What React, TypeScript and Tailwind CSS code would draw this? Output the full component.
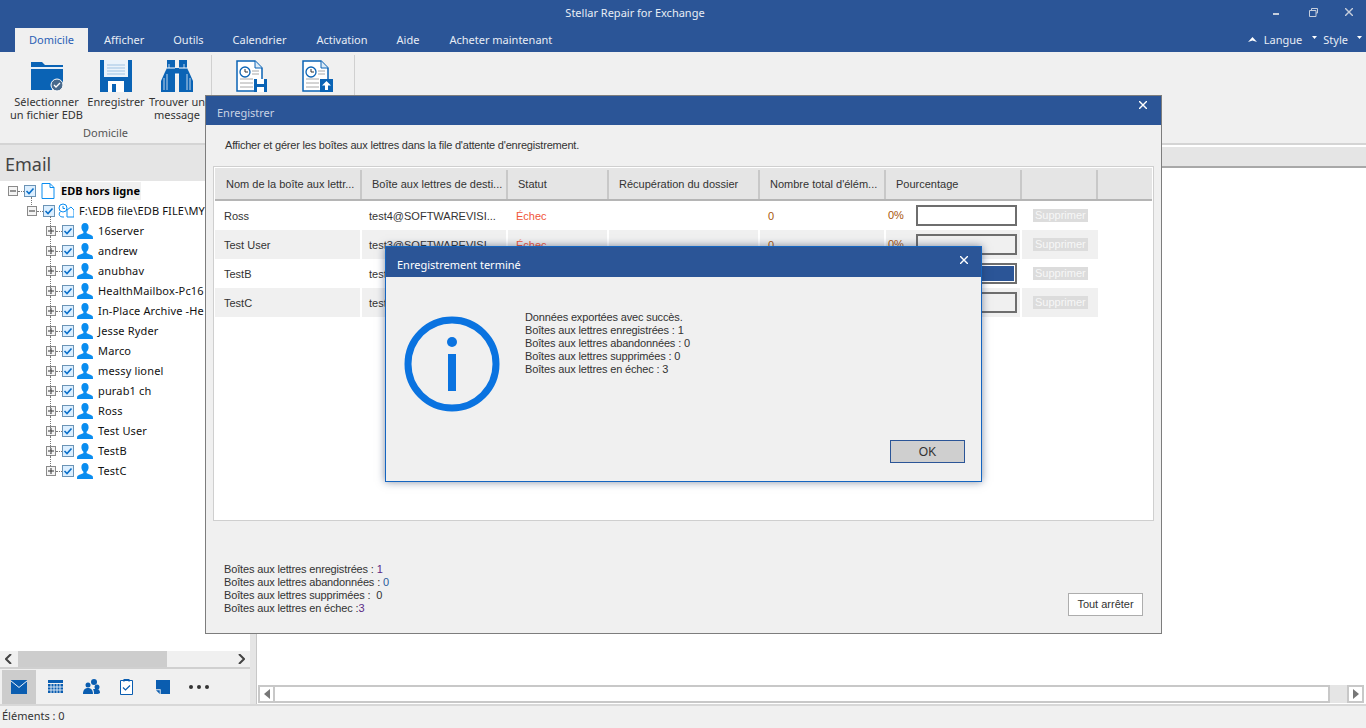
import React from "react";

const ui = "font-['Noto_Sans',sans-serif]";
const ms = "font-['Liberation_Sans',sans-serif]";

const users = ["16server","andrew","anubhav","HealthMailbox-Pc16","In-Place Archive -He","Jesse Ryder","Marco","messy lionel","purab1 ch","Ross","Test User","TestB","TestC"];

function Check() {
  return (
    <svg width="12" height="12" viewBox="0 0 12 12" className="shrink-0">
      <rect x="0.5" y="0.5" width="11" height="11" fill="#dcefff" stroke="#6b93b5" />
      <path d="M2.5 6l2.5 2.5 4.5-5" fill="none" stroke="#0a6fc9" strokeWidth="1.6" />
    </svg>
  );
}
function Expander({ open }: { open?: boolean }) {
  return (
    <svg width="10" height="10" viewBox="0 0 10 10" className="shrink-0">
      <rect x="0.5" y="0.5" width="9" height="9" fill="#f4f4f4" stroke="#8a8a8a" />
      <path d={open ? "M2 5h6" : "M2 5h6M5 2v6"} stroke="#333" strokeWidth="1" />
    </svg>
  );
}
function Person() {
  return (
    <svg width="16" height="16" viewBox="0 0 16 16" className="shrink-0">
      <path d="M8 0c2.4 0 3.6 1.9 3.6 4.2 0 2-1 3.7-2 4.5v1.2c0 .6 4.4 1.4 5.9 3 .5.6.5 2.1.5 3.1H0c0-1 0-2.500.5-3.100 1.500-1.600 5.900-2.400 5.900-3V8.700c-1-.8-2-2.500-2-4.500C4.400 1.900 5.600 0 8 0z" fill="#0a8df0" />
    </svg>
  );
}
function Ribbon({ children, w, className }: { children: React.ReactNode; w: string; className?: string }) {
  return <div className={`flex flex-col items-center ${w} ${className ?? ""}`}>{children}</div>;
}
function FolderIcon() {
  return (
    <svg width="32" height="32" viewBox="0 0 32 32">
      <path d="M0 2h11l3 3h18v6H0z" fill="#0a63b5" />
      <path d="M0 7h32v2H0z" fill="#fff" opacity="0.9" />
      <path d="M0 9h32v15H21v6H0z" fill="#0a63b5" />
      <circle cx="26" cy="25" r="6" fill="#48698c" stroke="#fff" strokeWidth="1" />
      <path d="M23 25l2 2 4-4" fill="none" stroke="#fff" strokeWidth="1.300" />
    </svg>
  );
}
function FloppyIcon() {
  return (
    <svg width="32" height="32" viewBox="0 0 32 32">
      <path d="M0 0h32v32H0z" fill="#0a63b5" />
      <path d="M4 0h24v17H4z" fill="#eaf3fb" />
      <path d="M7 5h18M7 8h18M7 11h18M7 14h18" stroke="#9fc3e3" strokeWidth="1" />
      <path d="M8 21h16v11H8z" fill="#fff" />
      <path d="M12 24h4v8h-4z" fill="#0a63b5" />
    </svg>
  );
}
function BinocularIcon() {
  return (
    <svg width="32" height="32" viewBox="0 0 32 32">
      <path d="M6 0h8v8h4V0h8v8l2 4 4 9v11H18V14h-4v18H0V21l4-9 2-4z" fill="#0a63b5" />
      <path d="M6 8h8M18 8h8M14 14h4" stroke="#fff" strokeWidth="1" />
      <path d="M3 18v12M6 14v16M8 4v4M23 4v4M26 14v16M29 18v12" stroke="#fff" strokeWidth="1" opacity="0.75" />
    </svg>
  );
}
function DocClock({ upload }: { upload?: boolean }) {
  return (
    <svg width="32" height="32" viewBox="0 0 32 32">
      <path d="M1 1h18l7 7v23H1z" fill="#fff" stroke="#0a63b5" strokeWidth="1.500" />
      <path d="M19 1v7h7" fill="#dcebf7" stroke="#0a63b5" />
      <circle cx="9" cy="12" r="5" fill="#fff" stroke="#0a63b5" strokeWidth="1.300" />
      <path d="M9 9v3h3" fill="none" stroke="#333" />
      <path d="M16 11h7M16 14h7M4 19h13M4 23h13M4 27h13" stroke="#a8a8a8" strokeWidth="1" />
      {upload ? (
        <g>
          <path d="M18 19h13v13H18z" fill="#0a63b5" />
          <path d="M24.500 21l4.500 4.500h-3V30h-3v-4.500h-3z" fill="#fff" />
        </g>
      ) : (
        <g>
          <path d="M18 19h13v13H18z" fill="#0a63b5" />
          <path d="M21 19h7v5h-7z" fill="#fff" />
          <path d="M21 27h7v5h-7z" fill="#fff" />
        </g>
      )}
    </svg>
  );
}
function Tree() {
  return (
    <div className={`${ui} bg-white flex-1 min-h-0 overflow-hidden text-[11px] tracking-[0.15px] text-[#111]`}>
      <div className="flex items-center h-5 pl-[8px] whitespace-nowrap">
        <Expander open />
        <span className="w-[6px] shrink-0 border-t border-dotted border-[#777]" />
        <Check />
        <svg width="14" height="16" viewBox="0 0 14 16" className="ml-[5px] shrink-0">
          <path d="M1 .5h8l4 4v11H1z" fill="#fff" stroke="#0a8df0" />
          <path d="M9 .5v4h4" fill="none" stroke="#0a8df0" />
        </svg>
        <span className="ml-[5px] bg-[#f0f0f0] px-[1px] font-bold text-black h-[18px] leading-[18px] tracking-normal">EDB hors ligne</span>
      </div>
      <div className="relative flex items-center h-5 pl-[27px] whitespace-nowrap">
        <span className="absolute left-[31px] top-[-4px] h-[8px] border-l border-dotted border-[#777]" />
        <Expander open />
        <span className="w-[6px] shrink-0 border-t border-dotted border-[#777]" />
        <Check />
        <svg width="16" height="16" viewBox="0 0 16 16" className="ml-[3px] shrink-0">
          <circle cx="5" cy="5" r="4" fill="none" stroke="#0a8df0" />
          <path d="M5 3v2.500h2M2 9c-2 3 0 5 3 5h1M9 7l4-3 3 3v7H9z" fill="none" stroke="#0a8df0" />
        </svg>
        <span className="ml-[5px]">F:\EDB file\EDB FILE\MY</span>
      </div>
      {users.map((u, i) => (
        <div key={u} className="relative flex items-center h-5 pl-[46px] whitespace-nowrap">
          <span className={`absolute left-[50px] top-[-5px] border-l border-dotted border-[#777] ${i === users.length - 1 ? "h-[10px]" : "h-[20px]"}`} />
          <Expander />
          <span className="w-[6px] shrink-0 border-t border-dotted border-[#777]" />
          <Check />
          <span className="ml-[3px] shrink-0"><Person /></span>
          <span className="ml-[5px]">{u}</span>
        </div>
      ))}
    </div>
  );
}
function Arrow({ dir, color = "#444" }: { dir: "l" | "r"; color?: string }) {
  return (
    <svg width="8" height="10" viewBox="0 0 8 10">
      <path d={dir === "l" ? "M6 0L1 5l5 5" : "M2 0l5 5-5 5"} fill="none" stroke={color} strokeWidth="2" />
    </svg>
  );
}
function NavIcons() {
  return (
    <div className="flex items-center h-[37px] pl-[2px] border-t-2 border-[#d0d0d0]">
      <div className="w-[34px] h-[34px] bg-[#cccccc] flex items-center justify-center">
        <svg width="16" height="14" viewBox="0 0 17 15" preserveAspectRatio="none">
          <path d="M0 0h17v15H0z" fill="#0a5db0" />
          <path d="M0 1l8.500 7L17 1" fill="none" stroke="#fff" />
        </svg>
      </div>
      <div className="w-[38px] flex justify-center">
        <svg width="15" height="13" viewBox="0 0 15 13">
          <path d="M0 0h15v3H0z" fill="#0a5db0" />
          <path d="M0 4h15v9H0z" fill="#0a5db0" />
          <path d="M3 4v9M6 4v9M9 4v9M12 4v9M0 7h15M0 10h15" stroke="#fff" strokeWidth="0.8" />
        </svg>
      </div>
      <div className="w-[34px] flex justify-center">
        <svg width="17" height="16" viewBox="0 0 17 16">
          <circle cx="11" cy="3" r="3" fill="#0a5db0" />
          <circle cx="5" cy="6" r="2.500" fill="#0a5db0" />
          <circle cx="14" cy="8" r="2.500" fill="#0a5db0" />
          <path d="M0 15c0-4 2-6 5-6s5 2 5 6zM11 15c0-3-.5-4-1-5h4c2 0 3 2 3 4l-2 1z" fill="#0a5db0" />
        </svg>
      </div>
      <div className="w-[37px] flex justify-center">
        <svg width="13" height="16" viewBox="0 0 13 16">
          <path d="M.5 1.500h12v14H.5z" fill="#fff" stroke="#0a5db0" />
          <path d="M3.500 0h6v3l-3-2-3 2z" fill="#0a5db0" />
          <path d="M3 8.500l2.500 2.500 4.500-4.500" fill="none" stroke="#0a5db0" strokeWidth="1.200" />
        </svg>
      </div>
      <div className="w-[36px] flex justify-center">
        <svg width="14" height="14" viewBox="0 0 15 15">
          <path d="M0 0h15v15H5v-5H0z" fill="#0a5db0" />
          <path d="M0 11h4v4z" fill="#0a5db0" />
        </svg>
      </div>
      <div className="flex gap-[4px] ml-[8px]">
        <span className="w-[4px] h-[4px] rounded-full bg-[#333]" />
        <span className="w-[4px] h-[4px] rounded-full bg-[#333]" />
        <span className="w-[4px] h-[4px] rounded-full bg-[#333]" />
      </div>
    </div>
  );
}
const cols = ["w-[147px]","w-[146px]","w-[101px]","w-[151px]","w-[126px]","w-[136px]","w-[76px]"];
const heads = ["Nom de la boîte aux lettr...","Boîte aux lettres de desti...","Statut","Récupération du dossier","Nombre total d'élém...","Pourcentage",""];
const rows = [
  { n: "Ross", m: "test4@SOFTWAREVISI...", p: "", hidden: false },
  { n: "Test User", m: "test3@SOFTWAREVISI...", p: "", hidden: false },
  { n: "TestB", m: "test", p: "full", hidden: true },
  { n: "TestC", m: "test", p: "", hidden: true },
];
function SaveDialog() {
  return (
    <div className={`${ms} absolute left-[205px] top-[95px] w-[957px] h-[539px] bg-[#f0f0f0] border border-[#7d7d7d] flex flex-col text-[11px] text-[#333]`}>
      <div className="h-[29px] shrink-0 bg-[#2b5597] flex items-center justify-between pl-[11px] pr-[14px] pt-[5px]">
        <span className={`${ui} text-[11px] text-[#c9d3e4]`}>Enregistrer</span>
        <svg width="8" height="8" viewBox="0 0 8 8" className="mb-[16px]"><path d="M0 0l8 8M8 0L0 8" stroke="#fff" strokeWidth="1.400" /></svg>
      </div>
      <div className="h-[41px] shrink-0 pl-[19px] pt-[13px] leading-[14px] tracking-[-0.2px]">Afficher et gérer les boîtes aux lettres dans la file d'attente d'enregistrement.</div>
      <div className="mx-[7px] h-[355px] shrink-0 border border-[#cfcfcf] p-[1px] bg-white">
        <div className="flex h-[33px] pt-[2px] bg-[#e5e5e5] border-b-2 border-[#b5b5b5]">
          {heads.map((h, i) => (
            <div key={i} className={`${cols[i]} shrink-0 border-r-2 border-[#c8c8c8] flex items-center whitespace-nowrap ${i === 0 ? "pl-[11px]" : "pl-[10px]"}`}>{h}</div>
          ))}
        </div>
        {rows.map((r, i) => {
          const bg = i % 2 ? "bg-[#f0f0f0]" : "";
          return (
            <div key={r.n} className="flex h-[29px] w-fit">
              <div className={`${cols[0]} shrink-0 pl-[9px] pt-[1px] flex items-center border-r-2 border-white ${bg}`}>{r.n}</div>
              <div className={`${cols[1]} shrink-0 pl-[7px] pt-[1px] flex items-center border-r-2 border-white ${bg}`}>{r.m}</div>
              <div className={`${cols[2]} shrink-0 pl-[8px] pt-[1px] flex items-center border-r-2 border-white text-[#f0553a] ${bg}`}>{r.hidden ? "" : "Échec"}</div>
              <div className={`${cols[3]} shrink-0 border-r-2 border-white ${bg}`} />
              <div className={`${cols[4]} shrink-0 pl-[8px] pt-[1px] flex items-center border-r-2 border-white text-[#a8540a] ${bg}`}>{r.hidden ? "" : "0"}</div>
              <div className={`${cols[5]} shrink-0 pl-[2px] flex items-center border-r-2 border-white ${bg}`}>
                <span className="w-[28px] text-[#a8540a]">{r.hidden ? "" : "0%"}</span>
                <span className={`w-[101px] h-[21px] border-2 border-[#6e6e6e] p-[1px] ${r.p ? "bg-white" : ""}`}>
                  {r.p ? <span className="block h-full bg-[#2b5597]" /> : null}
                </span>
              </div>
              <div className={`${cols[6]} shrink-0 pl-[11px] flex items-center ${bg}`}>
                <span className="bg-[#dcdcdc] text-[#f7f7f7] h-[13px] leading-[13px] px-[2px] text-[11px]">Supprimer</span>
              </div>
            </div>
          );
        })}
      </div>
      <div className="flex-1 flex items-end justify-between pl-[18px] pr-[18px] pb-[17px]">
        <div className="leading-[13px] mb-[1px] tracking-[-0.15px]">
          <div>Boîtes aux lettres enregistrées : <span className="text-[#5b2a86]">1</span></div>
          <div>Boîtes aux lettres abandonnées : <span className="text-[#2a5a9a]">0</span></div>
          <div>Boîtes aux lettres supprimées :  <span className="ml-[3px]">0</span></div>
          <div>Boîtes aux lettres en échec  :<span className="text-[#5b2a86]">3</span></div>
        </div>
        <button className="w-[75px] h-[23px] bg-white border border-[#adadad] text-[11px] text-[#333]">Tout arrêter</button>
      </div>
    </div>
  );
}
function DoneDialog() {
  return (
    <div className={`${ms} absolute left-[385px] top-[246px] w-[597px] h-[236px] bg-[#f0f0f0] border border-[#1565c0] shadow-[0_0_8px_rgba(30,50,90,0.55)] flex flex-col text-[11px] text-[#333]`}>
      <div className="h-[30px] shrink-0 bg-[#2b5597] flex items-center justify-between pl-[11px] pr-[13px]">
        <span className={`${ui} text-[11px] text-white pt-[6px]`}>Enregistrement terminé</span>
        <svg width="8" height="8" viewBox="0 0 8 8" className="mb-[4px]"><path d="M0 0l8 8M8 0L0 8" stroke="#fff" strokeWidth="1.400" /></svg>
      </div>
      <div className="flex-1 flex pl-[18px] pt-[34px]">
        <svg width="96" height="96" viewBox="0 0 96 96" className="shrink-0 mt-[5px]">
          <circle cx="48" cy="48" r="44" fill="none" stroke="#0a73e0" strokeWidth="7" />
          <circle cx="48" cy="26" r="5" fill="#0a73e0" />
          <path d="M44 38h8v37h-8z" fill="#0a73e0" />
        </svg>
        <div className="ml-[25px] leading-[13px] tracking-[-0.15px]">
          <div>Données exportées avec succès.</div>
          <div>Boîtes aux lettres enregistrées : 1</div>
          <div>Boîtes aux lettres abandonnées : 0</div>
          <div>Boîtes aux lettres supprimées : 0</div>
          <div>Boîtes aux lettres en échec : 3</div>
        </div>
      </div>
      <div className="flex justify-end pr-[16px] pb-[18px]">
        <button className="w-[75px] h-[23px] bg-[#cfcfcf] border border-[#2b5597] text-[12px] text-[#333]">OK</button>
      </div>
    </div>
  );
}
export default function App() {
  return (
    <div className={`${ui} relative w-[1366px] h-[728px] overflow-hidden bg-[#f0f0f0] flex flex-col text-[11px] text-[#333]`}>
      <div className="h-[52px] shrink-0 bg-[#2b5597] flex flex-col">
        <div className="h-[26px] relative flex items-center justify-center pr-[96px] text-[11px] text-[#e8edf5]">
          Stellar Repair for Exchange
          <div className="absolute right-[13px] top-[8px] flex items-start">
            <span className="w-[6px] h-[2px] bg-[#c6cedc] mt-[5px]" />
            <svg width="9" height="9" viewBox="0 0 9 9" className="ml-[30px]"><path d="M2.500 2V.5h6V5H7M.5 2.500h6.500V8.500H.5z" fill="none" stroke="#c6cedc" /></svg>
            <svg width="8" height="8" viewBox="0 0 8 8" className="ml-[27px]"><path d="M0 0l8 8M8 0L0 8" stroke="#c6cedc" strokeWidth="1.400" /></svg>
          </div>
        </div>
        <div className="h-[26px] flex items-end pl-[15px] text-[11px] text-[#e8edf5]">
          <span className="w-[73px] h-[24px] bg-[#f0f0f0] text-[#2b5fb5] flex items-center justify-center">Domicile</span>
          <span className="h-[24px] flex items-center ml-[16px]">Afficher</span>
          <span className="h-[24px] flex items-center ml-[29px]">Outils</span>
          <span className="h-[24px] flex items-center ml-[29px]">Calendrier</span>
          <span className="h-[24px] flex items-center ml-[30px]">Activation</span>
          <span className="h-[24px] flex items-center ml-[29px]">Aide</span>
          <span className="h-[24px] flex items-center ml-[30px]">Acheter maintenant</span>
          <div className="ml-auto h-[24px] flex items-center pr-[4px]">
            <svg width="9" height="6" viewBox="0 0 9 6"><path d="M4.500 0L9 5 4.500 3.500 0 5z" fill="#fff" /></svg>
            <span className="ml-[7px]">Langue</span>
            <svg width="5" height="3" viewBox="0 0 5 3" className="ml-[10px] mb-[6px]"><path d="M0 0h5L2.500 3z" fill="#fff" /></svg>
            <span className="ml-[6px]">Style</span>
            <svg width="5" height="3" viewBox="0 0 5 3" className="ml-[9px] mb-[6px]"><path d="M0 0h5L2.500 3z" fill="#fff" /></svg>
          </div>
        </div>
      </div>
      <div className="h-[93px] shrink-0 bg-[#f0f0f0] border-b-2 border-[#d4d4d4] flex text-[11px] leading-[13px] text-[#333]">
        <div className="w-[212px] border-r border-[#d0d0d0] mt-[3px] flex flex-col">
          <div className="flex pl-[9px] pt-[5px] h-[70px]">
            <Ribbon w="w-[75px]"><FolderIcon /><span className="mt-[3px] text-center">Sélectionner un fichier EDB</span></Ribbon>
            <Ribbon w="w-[60px]" className="ml-[2px]"><FloppyIcon /><span className="mt-[3px]">Enregistrer</span></Ribbon>
            <Ribbon w="w-[58px]" className="ml-[2px]"><BinocularIcon /><span className="mt-[3px] text-center">Trouver un message</span></Ribbon>
          </div>
          <div className="text-center text-[#555] mt-[1px]">Domicile</div>
        </div>
        <div className="w-[143px] border-r border-[#d0d0d0] mt-[3px] flex pl-[24px] gap-[34px] pt-[5px]">
          <DocClock />
          <DocClock upload />
        </div>
      </div>
      <div className="flex-1 min-h-0 flex">
        <div className="w-[250px] shrink-0 flex flex-col">
          <div className="h-[36px] shrink-0 bg-[#e5e5e5] pl-[5px] text-[18px] leading-[39px] text-[#444]">Email</div>
          <Tree />
          <div className="h-[16px] shrink-0 bg-[#f0f0f0] flex items-center justify-between px-[5px] relative">
            <Arrow dir="l" />
            <span className="absolute left-[18px] top-0 w-[149px] h-full bg-[#cdcdcd]" />
            <Arrow dir="r" />
          </div>
          <NavIcons />
        </div>
        <div className="w-[6px] shrink-0 bg-[#e5e5e5]" />
        <div className="flex-1 flex flex-col bg-white border-l border-[#c8c8c8]">
          <div className="h-[22px] mt-[1px] shrink-0 bg-[#e5e5e5] border-t border-white border-b-2 border-b-[#a8a8a8]" />
          <div className="flex-1" />
          <div className="h-[18px] shrink-0 flex ml-[1px] mr-[2px] mb-[1px] bg-[#e5e5e5]">
            <div className="w-[17px] border-2 border-[#c8c8c8] bg-white flex items-center justify-center">
              <svg width="6" height="10" viewBox="0 0 6 10"><path d="M6 0L0 5l6 5z" fill="#777" /></svg>
            </div>
            <div className="w-[1055px] border-2 border-l-0 border-[#c8c8c8] bg-white" />
            <div className="flex-1" />
            <div className="w-[17px] border-2 border-[#c8c8c8] bg-white flex items-center justify-center">
              <svg width="6" height="10" viewBox="0 0 6 10"><path d="M0 0l6 5-6 5z" fill="#777" /></svg>
            </div>
          </div>
        </div>
      </div>
      <div className="h-[24px] shrink-0 bg-[#f0f0f0] border-t-2 border-[#d8d8d8] pl-[2px] pb-[2px] flex items-center text-[11px] text-[#333]">Éléments : 0</div>
      <SaveDialog />
      <DoneDialog />
    </div>
  );
}
